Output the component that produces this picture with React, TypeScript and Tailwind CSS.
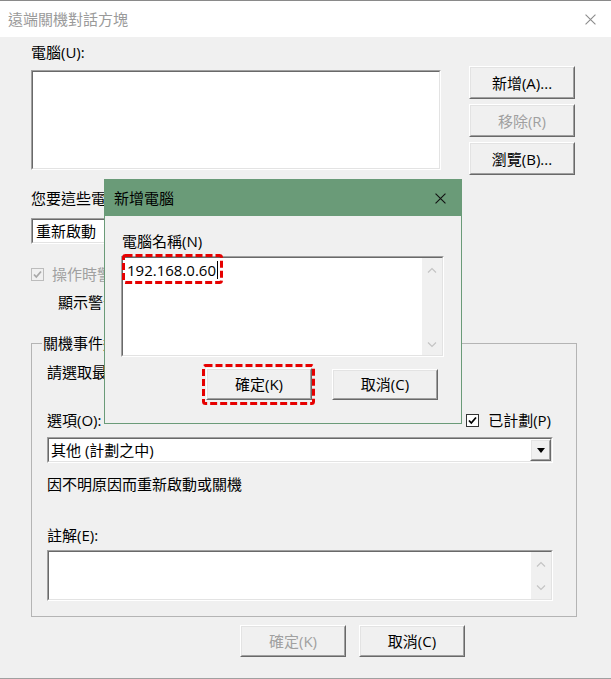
import React from 'react'

const sunkenOuter = 'border border-t-[#a0a0a0] border-l-[#a0a0a0] border-r-white border-b-white'
const sunkenInner = 'border border-t-[#696969] border-l-[#696969] border-r-[#e3e3e3] border-b-[#e3e3e3]'
const raisedOuter = 'border border-t-white border-l-white border-r-[#696969] border-b-[#696969]'
const raisedInner = 'border border-t-[#e3e3e3] border-l-[#e3e3e3] border-r-[#a0a0a0] border-b-[#a0a0a0]'

function Button({ label, disabled, className }: { label: string; disabled?: boolean; className?: string }) {
  return (
    <div className={`${raisedOuter} ${className ?? ''}`}>
      <div
        className={`${raisedInner} h-full flex items-center justify-center bg-[#f0f0f0] leading-[20px] ${
          disabled ? 'text-[#a0a0a0]' : 'text-black'
        }`}
      >
        {label}
      </div>
    </div>
  )
}

function Chevron({ up }: { up?: boolean }) {
  return (
    <svg width="10" height="6" viewBox="0 0 10 6">
      <path d={up ? 'M1 5.5 L5 1.5 L9 5.5' : 'M1 0.5 L5 4.5 L9 0.5'} fill="none" stroke="#c4c4c4" strokeWidth="1.2" />
    </svg>
  )
}

function TextArea({ className, children, scrollPad }: { className: string; children?: React.ReactNode; scrollPad: string }) {
  return (
    <div className={`${sunkenOuter} ${className}`}>
      <div className={`${sunkenInner} h-full flex bg-white`}>
        <div className="flex-1 relative">{children}</div>
        <div className={`w-[20px] bg-[#f0f0f0] flex flex-col items-center justify-between ${scrollPad}`}>
          <Chevron up />
          <Chevron />
        </div>
      </div>
    </div>
  )
}

function Checkbox({ checked, disabled }: { checked?: boolean; disabled?: boolean }) {
  return (
    <div
      className={`w-[13px] h-[13px] border flex items-center justify-center ${
        disabled ? 'border-[#bcbcbc] bg-[#f0f0f0]' : 'border-[#333] bg-white'
      }`}
    >
      {checked && (
        <svg width="9" height="9" viewBox="0 0 9 9">
          <path d="M1 4.5 L3.3 7 L8 1.5" fill="none" stroke={disabled ? '#a8a8a8' : '#000'} strokeWidth="1.8" />
        </svg>
      )}
    </div>
  )
}

function CloseX({ color, size }: { color: string; size: number }) {
  return (
    <svg width={size} height={size} viewBox="0 0 10 10">
      <path d="M0.5 0.5 L9.5 9.5 M9.5 0.5 L0.5 9.5" stroke={color} strokeWidth="1" />
    </svg>
  )
}

function DashBox({ className, w, h }: { className: string; w: number; h: number }) {
  return (
    <svg className={`absolute ${className}`} width={w} height={h}>
      <rect x="1.5" y="1.5" width={w - 3} height={h - 3} rx="2" fill="none" stroke="#e60000" strokeWidth="3" strokeDasharray="7 3" />
    </svg>
  )
}

function AddComputerDialog() {
  return (
    <div className="absolute left-[104px] top-[178px] w-[358px] h-[245px] border border-[#6a9b78] bg-[#f0f0f0] flex flex-col">
      <div className="h-[36px] bg-[#6a9b78] flex items-center justify-between pl-[9px] pr-[15px] text-[15px] leading-[20px] text-black">
        <span>新增電腦</span>
        <CloseX color="#111" size={11} />
      </div>
      <div className="pl-[16px] pt-[15px]">
        <div className="pl-[1px] leading-[20px]">電腦名稱(N)</div>
        <TextArea className="mt-[5px] w-[323px] h-[101px]" scrollPad="pt-[9px] pb-[7px]">
          <div className="pl-[4px] pt-[1px] leading-[22px] flex items-center">
            192.168.0.60
            <span className="inline-block w-[1px] h-[18px] bg-black ml-[1px]" />
          </div>
        </TextArea>
        <div className="flex gap-[20px] ml-[85px] mt-[11px] items-center">
          <Button label="確定(K)" className="w-[106px] h-[32px]" />
          <Button label="取消(C)" className="w-[106px] h-[31px]" />
        </div>
      </div>
      <DashBox className="left-[17px] top-[74px]" w={101} h={30} />
      <DashBox className="left-[97px] top-[184px]" w={113} h={41} />
    </div>
  )
}

export default function App() {
  return (
    <div className="relative w-[611px] h-[679px] overflow-hidden bg-[#f0f0f0] border-t border-t-[#8a8a8a] border-b border-b-[#a0a0a0] text-[15px] text-black font-[family-name:'Open_Sans','Noto_Sans_CJK_TC',sans-serif]">
      <div className="h-[36px] bg-white flex items-center justify-between pl-[8px] pr-[15px]">
        <span className="text-[#9a9a9a] leading-[20px]">遠端關機對話方塊</span>
        <CloseX color="#8c8c8c" size={11} />
      </div>

      <div className="pl-[31px]">
        <div className="mt-[5px] leading-[20px]">電腦(U):</div>
        <div className="flex items-start">
          <div className={`${sunkenOuter} mt-[8px] w-[410px] h-[100px]`}>
            <div className={`${sunkenInner} h-full bg-white`} />
          </div>
          <div className="ml-[28px] mt-[4px] flex flex-col gap-[5px]">
            <Button label="新增(A)..." className="w-[106px] h-[33px]" />
            <Button label="移除(R)" disabled className="w-[106px] h-[33px]" />
            <Button label="瀏覽(B)..." className="w-[106px] h-[33px]" />
          </div>
        </div>

        <div className="mt-[13px] leading-[20px]">您要這些電腦執行什麼動作(D)?</div>
        <div className={`${sunkenOuter} mt-[10px] w-[300px] h-[26px]`}>
          <div className={`${sunkenInner} h-full bg-white flex items-center pl-[3px] leading-[20px]`}>重新啟動</div>
        </div>
        <div className="mt-[20px] h-[20px] flex items-center gap-[8px]">
          <Checkbox checked disabled />
          <span className="text-[#a0a0a0] leading-[20px]">操作時警告使用者(W)</span>
        </div>
        <div className="mt-[8px] ml-[27px] leading-[20px]">顯示警告</div>

        <div className="relative mt-[31px] w-[546px] border border-[#b4b4b4] pl-[15px] pr-[23px] pt-[18px] pb-[15px]">
          <span className="absolute left-[10px] -top-[11px] px-[1px] bg-[#f0f0f0] leading-[20px]">關機事件追蹤器</span>
          <div className="leading-[20px]">請選取最能說明您要關閉這些電腦之原因的選項</div>
          <div className="mt-[28px] h-[20px] flex items-center justify-between">
            <span className="leading-[20px]">選項(O):</span>
            <div className="flex items-center gap-[9px] mr-[2px]">
              <Checkbox checked />
              <span className="leading-[20px]">已計劃(P)</span>
            </div>
          </div>
          <div className={`${sunkenOuter} mt-[7px] h-[26px]`}>
            <div className={`${sunkenInner} h-full bg-white flex items-center`}>
              <span className="flex-1 pl-[2px] leading-[20px]">其他 (計劃之中)</span>
              <div className={`${raisedOuter} w-[21px] h-full`}>
                <div className={`${raisedInner} h-full bg-[#f0f0f0] flex items-center justify-center`}>
                  <svg width="8" height="5" viewBox="0 0 8 5">
                    <path d="M0 0 H8 L4 5 Z" fill="#000" />
                  </svg>
                </div>
              </div>
            </div>
          </div>
          <div className="mt-[11px] leading-[20px]">因不明原因而重新啟動或關機</div>
          <div className="mt-[31px] leading-[20px]">註解(E):</div>
          <TextArea className="mt-[5px] h-[51px]" scrollPad="pt-[9px] pb-[8px]" />
        </div>

        <div className="mt-[8px] ml-[209px] flex gap-[13px]">
          <Button label="確定(K)" disabled className="w-[106px] h-[32px]" />
          <Button label="取消(C)" className="w-[106px] h-[32px]" />
        </div>
      </div>

      <AddComputerDialog />
    </div>
  )
}
